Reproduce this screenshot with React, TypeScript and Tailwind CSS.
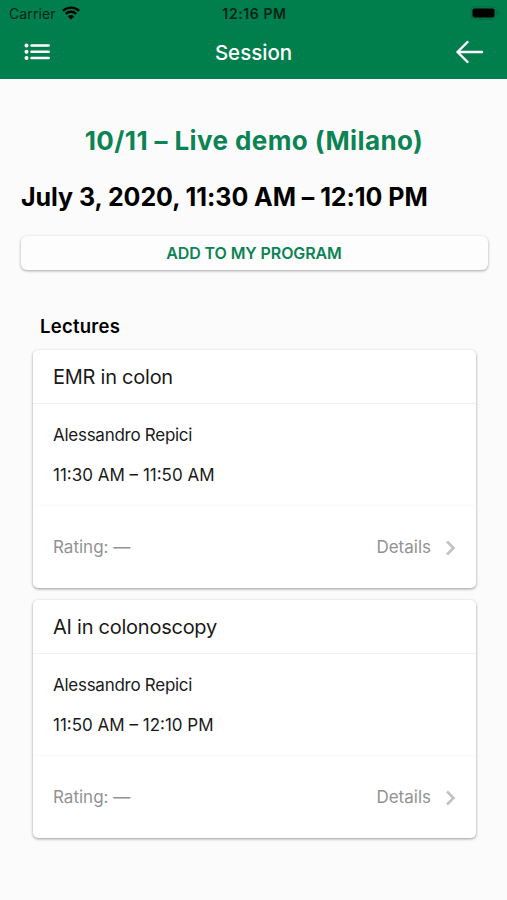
type Lecture = {
  title: string;
  speaker: string;
  time: string;
};

const lectures: Lecture[] = [
  { title: 'EMR in colon', speaker: 'Alessandro Repici', time: '11:30 AM – 11:50 AM' },
  { title: 'AI in colonoscopy', speaker: 'Alessandro Repici', time: '11:50 AM – 12:10 PM' },
];

const StatusBar = () => (
  <div className="grid h-[27px] grid-cols-3 items-center pl-[9px] pr-[7px] text-[14px] text-[#062416]">
    <div className="flex items-center gap-[6px]">
      <span className="tracking-[0.1px]">Carrier</span>
      <svg className="-mt-px" width="18" height="14" viewBox="0 0 18 14" fill="none" stroke="#000" strokeWidth="2.3">
        <path d="M0.9 4.9a11.5 11.5 0 0 1 16.2 0" />
        <path d="M3.8 7.9a7.4 7.4 0 0 1 10.4 0" />
        <path d="M9 13.6L5.9 10.4a4.4 4.4 0 0 1 6.2 0z" fill="#000" stroke="none" />
      </svg>
    </div>
    <span className="text-center font-semibold tracking-[0.6px] whitespace-nowrap">12:16 PM</span>
    <svg className="-mt-px justify-self-end" width="30" height="14" viewBox="0 0 30 14">
      <rect x="0.8" y="0.8" width="25.4" height="12.4" rx="3.6" fill="none" stroke="#006b41" />
      <rect x="2.5" y="2.5" width="22" height="9" rx="2" fill="#000" />
      <path d="M27.6 5v4c1-.3 1.6-1.1 1.6-2s-.6-1.7-1.6-2z" fill="#006b41" />
    </svg>
  </div>
);

const NavBar = () => (
  <div className="flex h-[52px] items-center justify-between pl-[24px] pr-[23px] text-white">
    <button aria-label="Menu">
      <svg className="-mt-[2px]" width="27" height="18" viewBox="0 0 27 18" fill="none" stroke="currentColor" strokeLinecap="round">
        <path d="M7.5 2.5h17.2M7.5 8.7h17.2M7.5 14.9h17.2" strokeWidth="2.5" />
        <path d="M2.5 2.5h.01M2.5 8.7h.01M2.5 14.9h.01" strokeWidth="4" />
      </svg>
    </button>
    <h1 className="text-[20.5px] font-medium">Session</h1>
    <button aria-label="Back">
      <svg className="-mt-[2px]" width="28" height="24" viewBox="0 0 28 24" fill="none" stroke="currentColor" strokeWidth="2.4" strokeLinecap="round" strokeLinejoin="round">
        <path d="M11.5 2L1.5 12l10 10M1.5 12h24.5" />
      </svg>
    </button>
  </div>
);

const LectureCard = ({ title, speaker, time }: Lecture) => (
  <article className="h-[238px] rounded-[5px] bg-white text-[#1a1a1a] shadow-[0_1px_3px_rgba(0,0,0,0.4)]">
    <h3 className="flex h-[54px] items-center border-b border-[#f1f1f1] px-5 text-[20px] tracking-[-0.25px]">
      {title}
    </h3>
    <div className="flex h-[102px] flex-col border-b border-[#f8f8f8] px-5 pt-[11px] text-[17px] leading-[40px]">
      <p className="tracking-[-0.27px]">{speaker}</p>
      <p>{time}</p>
    </div>
    <div className="flex h-[82px] items-center justify-between pt-px pl-5 pr-[20px] text-[17px] text-[#929292]">
      <span>Rating: —</span>
      <button className="flex items-center gap-[14px]">
        Details
        <svg width="11" height="16" viewBox="0 0 11 16" fill="none" stroke="#c2c2c2" strokeWidth="2.6">
          <path d="M2 1.5L8.5 8L2 14.5" />
        </svg>
      </button>
    </div>
  </article>
);

const App = () => {
  return (
    <div className="min-h-screen bg-[#fbfbfb] font-['Inter',sans-serif] text-black">
      <header className="bg-[#007f4d]">
        <StatusBar />
        <NavBar />
      </header>

      <main className="pt-[42px] pr-[19px] pl-[21px]">
        <h2 className="pr-px text-center text-[26px] leading-[40px] font-bold tracking-[0.4px] text-[#0b8354]">
          10/11 – Live demo (Milano)
        </h2>
        <p className="mt-4 text-[25px] leading-[40px] font-bold tracking-[-0.05px] whitespace-nowrap">
          July 3, 2020, 11:30 AM – 12:10 PM
        </p>
        <button className="mt-[19px] h-[34px] w-full rounded-[6px] bg-[#fdfdfd] pr-px text-[16px] font-semibold tracking-[-0.1px] text-[#0b8354] shadow-[0_1px_3px_rgba(0,0,0,0.35)]">
          ADD TO MY PROGRAM
        </button>

        <section className="mt-[42px] px-3">
          <h3 className="pl-[7px] text-[18.5px] leading-[28px] font-semibold tracking-[0.25px]">Lectures</h3>
          <div className="mt-[10px] flex flex-col gap-3">
            {lectures.map((lecture) => (
              <LectureCard key={lecture.title} {...lecture} />
            ))}
          </div>
        </section>
      </main>
    </div>
  );
};

export default App;
